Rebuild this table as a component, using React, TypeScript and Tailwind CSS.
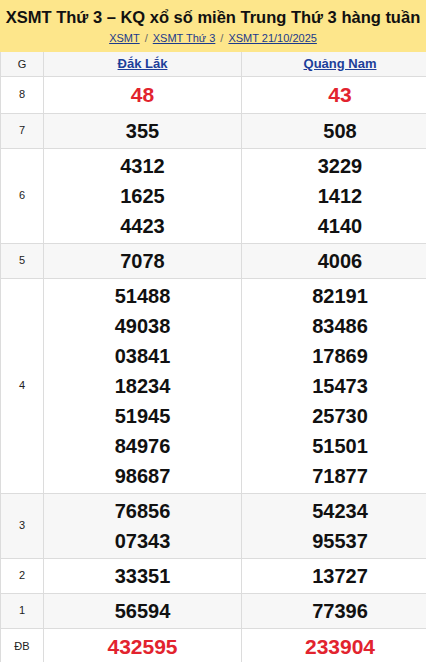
import React from "react";

type Row = { g: string; a: string[]; b: string[]; red?: boolean };

const rows: Row[] = [
  { g: "8", a: ["48"], b: ["43"], red: true },
  { g: "7", a: ["355"], b: ["508"] },
  { g: "6", a: ["4312", "1625", "4423"], b: ["3229", "1412", "4140"] },
  { g: "5", a: ["7078"], b: ["4006"] },
  {
    g: "4",
    a: ["51488", "49038", "03841", "18234", "51945", "84976", "98687"],
    b: ["82191", "83486", "17869", "15473", "25730", "51501", "71877"],
  },
  { g: "3", a: ["76856", "07343"], b: ["54234", "95537"] },
  { g: "2", a: ["33351"], b: ["13727"] },
  { g: "1", a: ["56594"], b: ["77396"] },
  { g: "ĐB", a: ["432595"], b: ["233904"], red: true },
];

function Cell({ nums, red }: { nums: string[]; red?: boolean }) {
  return (
    <td className="border border-[#dcdcdc] py-[2px] text-center align-middle">
      {nums.map((n) => (
        <div
          key={n}
          className={
            red
              ? "text-[21px] leading-[32px] font-bold text-[#e2232e]"
              : "text-[20px] leading-[30px] font-bold text-[#111]"
          }
        >
          {n}
        </div>
      ))}
    </td>
  );
}

export default function App() {
  return (
    <div
      className="w-[426px] h-[662px] overflow-hidden bg-white"
      style={{ fontFamily: '"Liberation Sans", Arial, sans-serif' }}
    >
      <div className="bg-[#fde68b] h-[52px] flex flex-col items-center pt-[6px]">
        <h1 className="text-[16.5px] leading-[23px] font-bold text-[#111] whitespace-nowrap">
          XSMT Thứ 3 – KQ xổ số miền Trung Thứ 3 hàng tuần
        </h1>
        <div className="text-[11px] leading-[16px] mt-[1px] text-[#666] flex gap-[5px]">
          <a className="underline text-[#1b3a8c]">XSMT</a>
          <span>/</span>
          <a className="underline text-[#1b3a8c]">XSMT Thứ 3</a>
          <span>/</span>
          <a className="underline text-[#1b3a8c]">XSMT 21/10/2025</a>
        </div>
      </div>
      <table className="w-[438px] border-collapse table-fixed">
        <colgroup>
          <col className="w-[43px]" />
          <col className="w-[198px]" />
          <col className="w-[197px]" />
        </colgroup>
        <thead>
          <tr className="bg-[#f6f6f6] h-[24px]">
            <th className="border border-[#dcdcdc] border-t-0 text-[11px] font-normal text-[#222]">G</th>
            <th className="border border-[#dcdcdc] border-t-0 text-[13px] font-bold">
              <a className="underline text-[#1d3f9a]">Đắk Lắk</a>
            </th>
            <th className="border border-[#dcdcdc] border-t-0 text-[13px] font-bold">
              <a className="underline text-[#1d3f9a]">Quảng Nam</a>
            </th>
          </tr>
        </thead>
        <tbody>
          {rows.map((r, i) => (
            <tr key={r.g} className={i % 2 === 1 ? "bg-[#f7f7f7]" : "bg-white"}>
              <td className="border border-[#dcdcdc] text-center text-[11px] text-[#222] align-middle">{r.g}</td>
              <Cell nums={r.a} red={r.red} />
              <Cell nums={r.b} red={r.red} />
            </tr>
          ))}
        </tbody>
      </table>
    </div>
  );
}
